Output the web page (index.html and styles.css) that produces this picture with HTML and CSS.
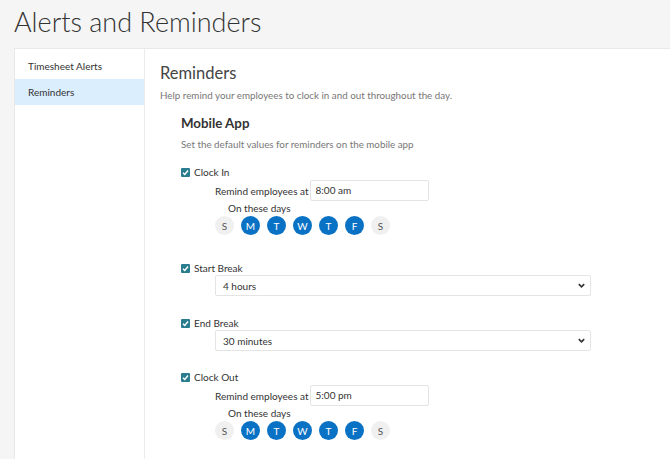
FILE: index.html
```html
<!DOCTYPE html>
<html>
<head>
<meta charset="utf-8">
<link rel="stylesheet" href="styles.css">
</head>
<body>
<h1 class="page-title">Alerts and Reminders</h1>
<div class="card">
  <nav class="sidebar">
    <div class="nav-item">Timesheet Alerts</div>
    <div class="nav-item active">Reminders</div>
  </nav>
  <main class="content">
    <h2 class="section-title">Reminders</h2>
    <p class="section-desc">Help remind your employees to clock in and out throughout the day.</p>
    <div class="group">
      <h3 class="group-title">Mobile App</h3>
      <p class="group-desc">Set the default values for reminders on the mobile app</p>

      <div class="reminder with-days">
        <label class="check"><span class="box"><svg viewBox="0 0 10 10"><path d="M2.2 5.2 L4.2 7.2 L7.8 2.8" /></svg></span>Clock In</label>
        <div class="row-time"><span>Remind employees at</span><div class="input">8:00 am</div></div>
        <div class="days-label">On these days</div>
        <div class="days">
          <span class="day">S</span><span class="day on">M</span><span class="day on">T</span><span class="day on">W</span><span class="day on">T</span><span class="day on">F</span><span class="day">S</span>
        </div>
      </div>

      <div class="reminder with-select">
        <label class="check"><span class="box"><svg viewBox="0 0 10 10"><path d="M2.2 5.2 L4.2 7.2 L7.8 2.8" /></svg></span>Start Break</label>
        <div class="select"><span>4 hours</span><svg class="chev" viewBox="0 0 10 10"><path d="M2 3.5 L5 6.5 L8 3.5" /></svg></div>
      </div>

      <div class="reminder with-select">
        <label class="check"><span class="box"><svg viewBox="0 0 10 10"><path d="M2.2 5.2 L4.2 7.2 L7.8 2.8" /></svg></span>End Break</label>
        <div class="select"><span>30 minutes</span><svg class="chev" viewBox="0 0 10 10"><path d="M2 3.5 L5 6.5 L8 3.5" /></svg></div>
      </div>

      <div class="reminder with-days">
        <label class="check"><span class="box"><svg viewBox="0 0 10 10"><path d="M2.2 5.2 L4.2 7.2 L7.8 2.8" /></svg></span>Clock Out</label>
        <div class="row-time"><span>Remind employees at</span><div class="input">5:00 pm</div></div>
        <div class="days-label">On these days</div>
        <div class="days">
          <span class="day">S</span><span class="day on">M</span><span class="day on">T</span><span class="day on">W</span><span class="day on">T</span><span class="day on">F</span><span class="day">S</span>
        </div>
      </div>
    </div>
  </main>
</div>
</body>
</html>
```
FILE: styles.css
```css
html, body {
  margin: 0;
  padding: 0;
  height: 100%;
  overflow: hidden;
}
body {
  background: #f5f5f5;
  font-family: "Lato", "Open Sans", sans-serif;
  color: #333;
  font-size: 10px;
}
.page-title {
  margin: 0;
  height: 48px;
  padding-left: 14px;
  font-weight: 300;
  font-size: 27px;
  line-height: 44px;
  color: #333;
}
.card {
  margin-left: 14px;
  background: #fff;
  border-top: 1px solid #e8e8e8;
  border-left: 1px solid #e8e8e8;
  display: flex;
  height: 420px;
}
.sidebar {
  width: 129px;
  border-right: 1px solid #ebebeb;
  padding-top: 4px;
  flex-shrink: 0;
}
.nav-item {
  height: 26px;
  line-height: 26px;
  padding-left: 13px;
  font-size: 10px;
  color: #333;
}
.nav-item.active {
  background: #dbeefd;
}
.content {
  padding-left: 15px;
  flex: 1;
}
.section-title {
  margin: 13px 0 0;
  font-weight: 400;
  font-size: 16.5px;
  line-height: 22px;
  color: #444;
}
.section-desc {
  margin: 4px 0 0;
  color: #777;
  line-height: 14px;
  font-size: 9.8px;
}
.group {
  padding-left: 21px;
}
.group-title {
  margin: 11px 0 0;
  font-size: 13.3px;
  font-weight: 700;
  line-height: 20px;
  color: #333;
}
.group-desc {
  margin: 4px 0 0;
  color: #777;
  line-height: 14px;
  font-size: 9.8px;
}
.reminder {
  margin-top: 14px;
}
.with-days + .reminder {
  margin-top: 26px;
}
.with-select + .with-select {
  margin-top: 20px;
}
.with-select + .with-days {
  margin-top: 19px;
}
.check {
  display: flex;
  align-items: center;
  height: 14px;
  line-height: 14px;
  color: #333;
}
.box {
  width: 9px;
  height: 9px;
  background: #2a7d8f;
  border-radius: 1px;
  margin-right: 4px;
  display: inline-flex;
}
.box svg {
  width: 9px;
  height: 9px;
  fill: none;
  stroke: #fff;
  stroke-width: 1.6;
}
.row-time {
  display: flex;
  align-items: center;
  margin-left: 34px;
  margin-top: 1px;
  gap: 1px;
}
.input {
  width: 112px;
  height: 19px;
  border: 1px solid #e4e4e4;
  border-radius: 2px;
  line-height: 19px;
  padding-left: 5px;
}
.days-label {
  margin-left: 47px;
  margin-top: 0;
  line-height: 14px;
}
.days {
  display: flex;
  gap: 7px;
  margin-left: 34px;
  margin-top: 1px;
}
.day {
  width: 19px;
  height: 19px;
  border-radius: 50%;
  background: #f0f0f0;
  color: #555;
  display: flex;
  align-items: center;
  justify-content: center;
  font-size: 10px;
}
.day.on {
  background: #0a72c4;
  color: #fff;
}
.select {
  margin-left: 34px;
  margin-top: 0;
  height: 19px;
  border: 1px solid #e4e4e4;
  border-radius: 2px;
  display: flex;
  align-items: center;
  justify-content: space-between;
  padding: 0 4px 0 7px;
  width: 363px;
}
.chev {
  width: 9px;
  height: 9px;
  fill: none;
  stroke: #333;
  stroke-width: 1.8;
}
```
